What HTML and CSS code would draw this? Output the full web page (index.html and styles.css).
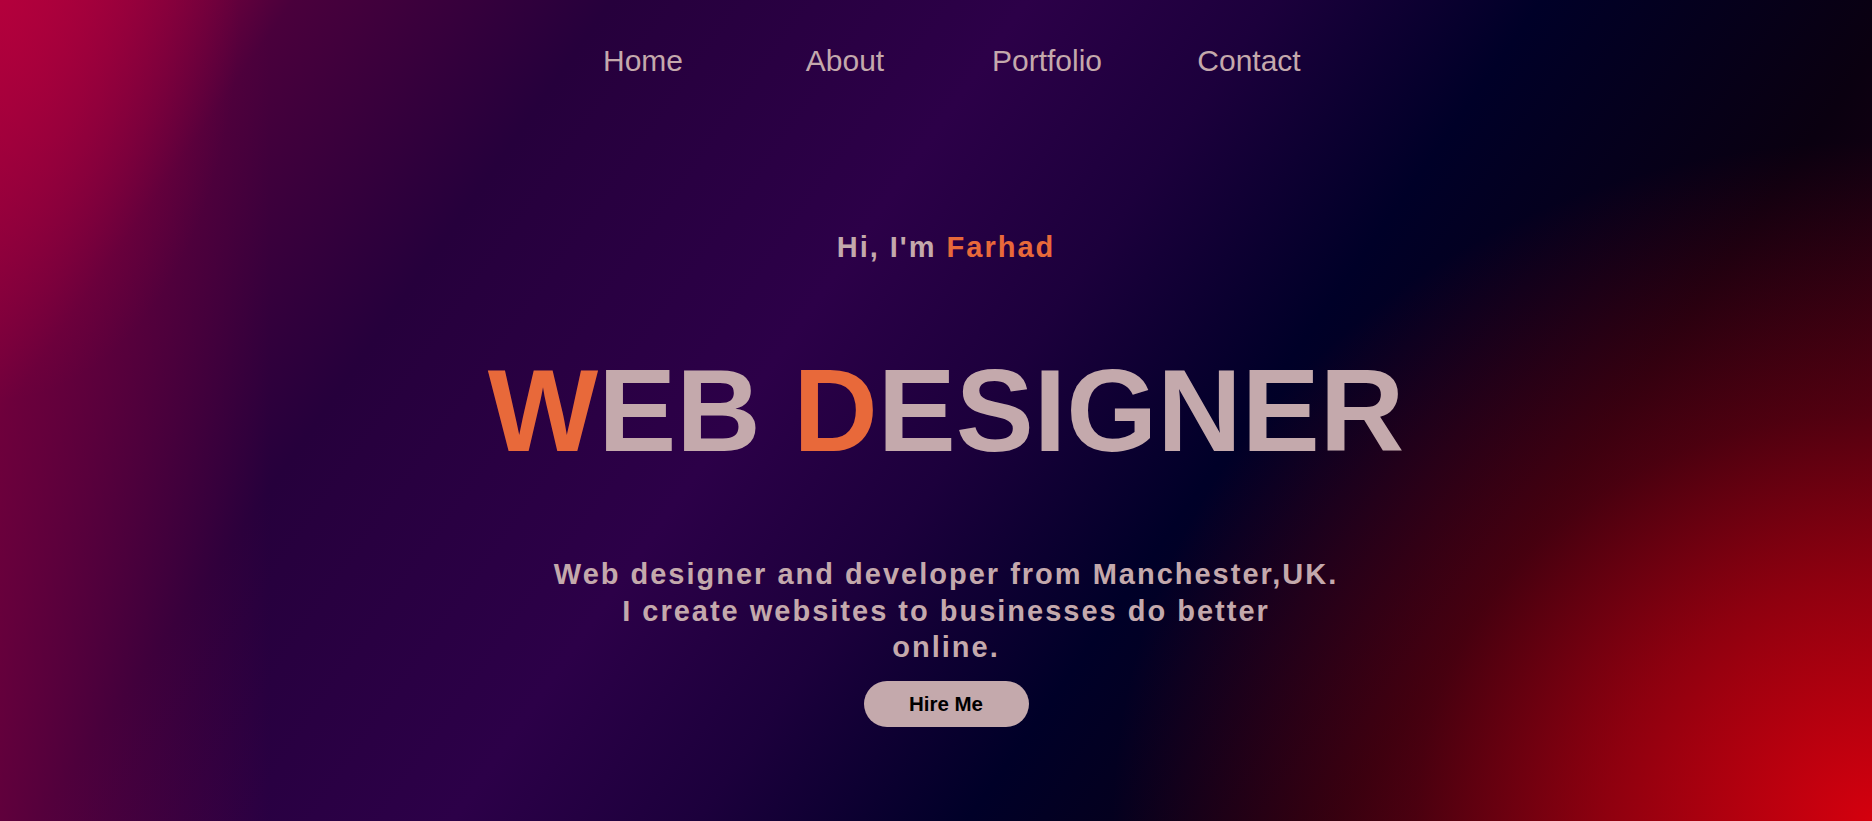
FILE: index.html
```html
<!DOCTYPE html>
<html lang="en">
<head>
<meta charset="utf-8">
<title>Farhad - Web Designer</title>
<link rel="stylesheet" href="styles.css">
</head>
<body>
<div class="page">
  <nav class="nav">
    <ul class="nav-list">
      <li class="nav-item"><a class="nav-link" href="#">Home</a></li>
      <li class="nav-item"><a class="nav-link" href="#">About</a></li>
      <li class="nav-item"><a class="nav-link" href="#">Portfolio</a></li>
      <li class="nav-item"><a class="nav-link" href="#">Contact</a></li>
    </ul>
  </nav>
  <main class="hero">
    <p class="greeting">Hi, I'm <span class="accent">Farhad</span></p>
    <h1 class="title"><span class="accent">W</span>EB <span class="accent">D</span>ESIGNER</h1>
    <p class="intro">Web designer and developer from Manchester,UK.<br>I create websites to businesses do better<br>online.</p>
    <a class="btn" href="#">Hire Me</a>
  </main>
</div>
</body>
</html>
```
FILE: styles.css
```css
html, body {
  margin: 0;
  height: 100%;
}

body {
  font-family: "Liberation Sans", Arial, sans-serif;
  color: #c4a9ac;
  overflow: hidden;
  background:
    radial-gradient(760px 680px at 100% 100%, rgba(212, 0, 14, 1) 0%, rgba(212, 0, 14, 0.62) 35%, rgba(212, 0, 14, 0.3) 60%, rgba(212, 0, 14, 0) 100%),
    radial-gradient(240px 400px at 0 0, rgba(200, 0, 60, 0.5), rgba(200, 0, 60, 0)),
    linear-gradient(90deg, rgba(140, 0, 60, 0.55) 0px, rgba(140, 0, 60, 0) 270px),
    linear-gradient(125deg, #b8003c 0%, #4a003c 12%, #26003c 25%, #2c0048 42%, #1c003c 52%, #000028 63%, #0a0010 78%, #300012 100%);
}

.page {
  min-height: 100%;
  padding-left: 20px;
  box-sizing: border-box;
}

.nav-list {
  display: flex;
  justify-content: center;
  list-style: none;
  margin: 0;
  padding: 44px 0 0;
}

.nav-item {
  width: 202px;
  text-align: center;
  font-size: 30px;
  line-height: 34px;
}

.nav-link {
  color: #c4a9ac;
  text-decoration: none;
}

.hero {
  display: flex;
  flex-direction: column;
  align-items: center;
  text-align: center;
}

.accent {
  color: #e8693a;
}

.greeting {
  margin: 152px 0 0;
  font-size: 29px;
  font-weight: bold;
  letter-spacing: 2px;
  line-height: 34px;
}

.title {
  margin: 88px 0 0;
  font-size: 117px;
  line-height: 117px;
  font-weight: bold;
}

.intro {
  margin: 87px 0 0;
  font-size: 29px;
  font-weight: bold;
  letter-spacing: 2px;
  line-height: 36.5px;
}

.btn {
  margin-top: 15px;
  width: 165px;
  height: 46.5px;
  border-radius: 23px;
  background: #c4a9ac;
  color: #000;
  font-size: 20.5px;
  font-weight: bold;
  text-decoration: none;
  display: flex;
  align-items: center;
  justify-content: center;
}
```
